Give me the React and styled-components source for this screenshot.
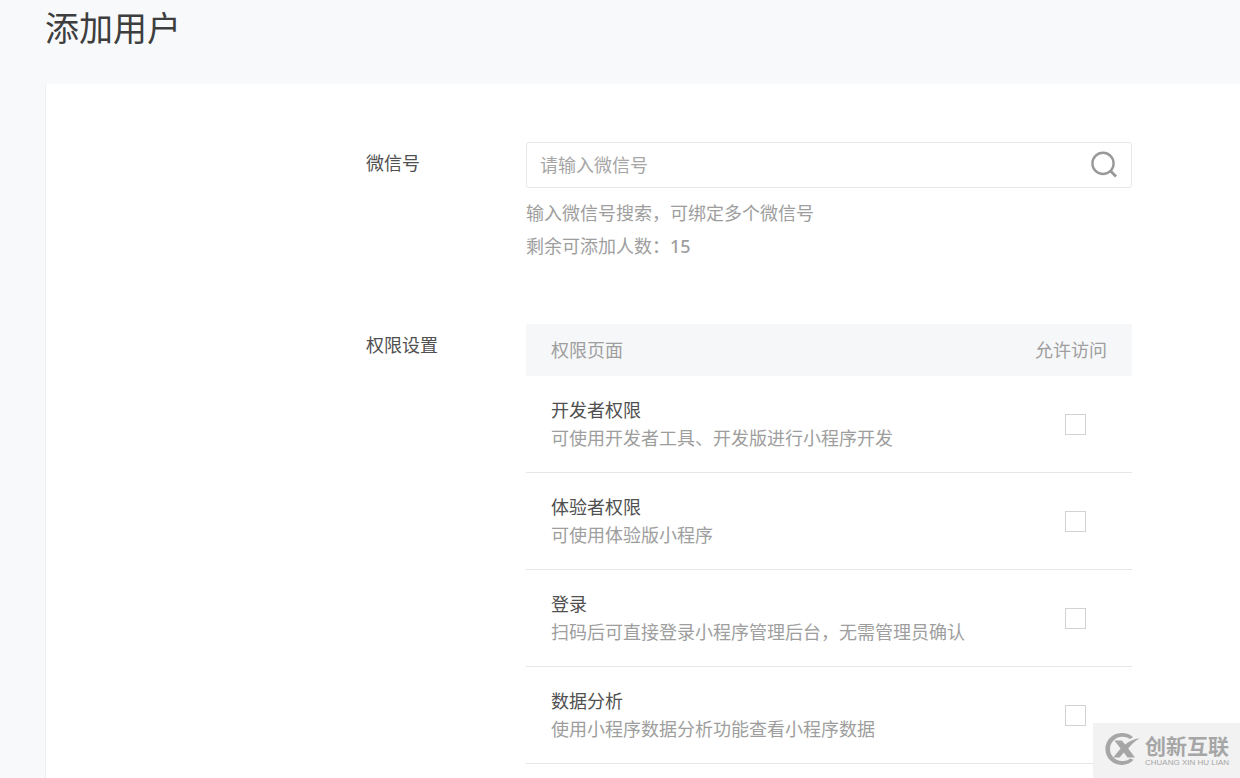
import React from "react";
import styled, { createGlobalStyle } from "styled-components";

const GlobalStyle = createGlobalStyle`
  *, *::before, *::after { box-sizing: border-box; }
  body {
    margin: 0;
    background: #f8f9fb;
    color: #505050;
    font-family: "Noto Sans", "Noto Sans CJK SC", sans-serif;
    font-size: 18px;
    line-height: 28px;
  }
`;

const Page = styled.main`
  display: flex;
  flex-direction: column;
  min-height: 100vh;
  padding-left: 45px;
`;

const Title = styled.h1`
  margin: 0;
  padding: 4px 0 32px;
  font-size: 34px;
  font-weight: 400;
  line-height: 48px;
  color: #3e3e3e;
`;

const Card = styled.form`
  flex: 1;
  display: flex;
  flex-direction: column;
  gap: 61px;
  padding: 58px 108px 0 320px;
  background: #fff;
  border-left: 1px solid #eceef1;
`;

const Field = styled.div`
  display: grid;
  grid-template-columns: 160px minmax(0, 1fr);
`;

const FieldLabel = styled.label`
  padding-top: 7px;
`;

const SearchBox = styled.div`
  display: flex;
  align-items: center;
  height: 46px;
  padding: 0 13px;
  border: 1px solid #e5e6e8;
  border-radius: 3px;
`;

const SearchInput = styled.input`
  flex: 1;
  min-width: 0;
  padding: 0;
  border: 0;
  outline: 0;
  background: transparent;
  font: inherit;
  color: #505050;
  &::placeholder { color: #a6a6a6; opacity: 1; }
`;

const SearchButton = styled.button`
  display: flex;
  padding: 0;
  border: 0;
  background: none;
  color: #999;
  cursor: pointer;
`;

const Hints = styled.div`
  padding-top: 9px;
  line-height: 33px;
  color: #9e9e9e;
`;

const Hint = styled.p`
  margin: 0;
`;

const Count = styled.span`
  font-weight: 500;
`;

const Table = styled.table`
  width: 100%;
  border-collapse: separate;
  border-spacing: 0;
`;

const HeadCell = styled.th`
  height: 52px;
  padding: 0 25px;
  background: #f6f7f9;
  color: #9e9e9e;
  font-weight: 400;
  text-align: ${(p) => p.$align || "left"};
`;

const Cell = styled.td`
  height: 97px;
  padding: 0 25px;
  border-bottom: 1px solid #e6e7e9;
`;

const CheckCell = styled(Cell)`
  padding-right: 46px;
`;

const PermissionName = styled.label`
  display: block;
`;

const PermissionText = styled.p`
  margin: 0;
  color: #9e9e9e;
`;

const Checkbox = styled.input`
  appearance: none;
  display: block;
  width: 21px;
  height: 21px;
  margin: 0 0 0 auto;
  border: 1px solid #d2d2d2;
  background: #fff;
  cursor: pointer;
  &:checked { background: #07c160; border-color: #07c160; }
`;

const Watermark = styled.aside`
  position: fixed;
  right: 0;
  bottom: 0;
  display: flex;
  align-items: center;
  gap: 5px;
  width: 147px;
  height: 55px;
  padding: 0 0 4px 11px;
  background: #f2f2f2;
  color: #a6a6a6;
`;

const BrandText = styled.div`
  display: flex;
  flex-direction: column;
  white-space: nowrap;
`;

const BrandName = styled.span`
  font-family: "Noto Sans CJK SC", sans-serif;
  font-size: 21px;
  font-weight: 700;
  line-height: 28px;
`;

const BrandLatin = styled.span`
  font-family: "Liberation Sans", sans-serif;
  font-size: 8px;
  line-height: 8px;
`;

const permissions = [
  { id: "developer", name: "开发者权限", text: "可使用开发者工具、开发版进行小程序开发" },
  { id: "tester", name: "体验者权限", text: "可使用体验版小程序" },
  { id: "login", name: "登录", text: "扫码后可直接登录小程序管理后台，无需管理员确认" },
  { id: "analysis", name: "数据分析", text: "使用小程序数据分析功能查看小程序数据" },
];

function SearchIcon() {
  return (
    <svg width="28" height="28" viewBox="0 0 28 28" fill="none" stroke="currentColor" aria-hidden="true">
      <circle cx="13" cy="12.4" r="10.6" strokeWidth="2.4" />
      <path d="M20 19.4L26 25.4" strokeWidth="2.8" />
    </svg>
  );
}

function BrandLogo() {
  return (
    <svg width="36" height="36" viewBox="0 0 36 36" aria-hidden="true">
      <path
        d="M29 6.2C26 3.3 22 2 17.5 2.1C8.6 2.4 1.4 9.2 1.4 18C1.4 27 8.8 33.8 17.6 33.9C22.4 34 26.6 32.2 29.6 28.8L26.4 27.6C24 29.4 21.2 30.3 18 30.1C11.4 29.8 6 24.8 6 18C6 11.2 11.4 6 18 5.8C21 5.7 23.6 6.4 25.8 8Z"
        fill="currentColor"
      />
      <path
        d="M10.4 9.4H17.8L21.2 13.6C25 10.2 29.6 7.8 35.8 7.2C30.6 10.2 27.2 13.6 24.2 17.4L31 26.4H23.6L19.8 21.6L15.6 26.4H9.2L16.6 17.6Z"
        fill="currentColor"
      />
    </svg>
  );
}

export default function App() {
  return (
    <>
      <GlobalStyle />
      <Page>
        <Title>添加用户</Title>
        <Card onSubmit={(e) => e.preventDefault()}>
          <Field>
            <FieldLabel htmlFor="wechat-id">微信号</FieldLabel>
            <div>
              <SearchBox>
                <SearchInput id="wechat-id" type="text" placeholder="请输入微信号" />
                <SearchButton type="submit" aria-label="搜索">
                  <SearchIcon />
                </SearchButton>
              </SearchBox>
              <Hints>
                <Hint>输入微信号搜索，可绑定多个微信号</Hint>
                <Hint>
                  剩余可添加人数：<Count>15</Count>
                </Hint>
              </Hints>
            </div>
          </Field>
          <Field>
            <FieldLabel as="div" id="permission-title">权限设置</FieldLabel>
            <Table aria-labelledby="permission-title">
              <thead>
                <tr>
                  <HeadCell scope="col">权限页面</HeadCell>
                  <HeadCell scope="col" $align="right">允许访问</HeadCell>
                </tr>
              </thead>
              <tbody>
                {permissions.map((item) => (
                  <tr key={item.id}>
                    <Cell>
                      <PermissionName htmlFor={item.id}>{item.name}</PermissionName>
                      <PermissionText>{item.text}</PermissionText>
                    </Cell>
                    <CheckCell>
                      <Checkbox type="checkbox" id={item.id} />
                    </CheckCell>
                  </tr>
                ))}
              </tbody>
            </Table>
          </Field>
        </Card>
      </Page>
      <Watermark>
        <BrandLogo />
        <BrandText>
          <BrandName>创新互联</BrandName>
          <BrandLatin>CHUANG XIN HU LIAN</BrandLatin>
        </BrandText>
      </Watermark>
    </>
  );
}
